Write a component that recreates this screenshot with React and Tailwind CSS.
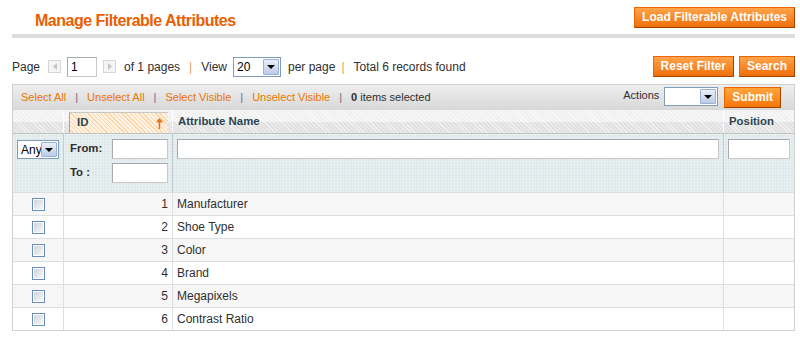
import React from "react";

const rows = [
  [1, "Manufacturer"],
  [2, "Shoe Type"],
  [3, "Color"],
  [4, "Brand"],
  [5, "Megapixels"],
  [6, "Contrast Ratio"],
];

const hdrBg =
  "bg-[image:repeating-linear-gradient(45deg,rgba(255,255,255,0.55)_0_1px,transparent_1px_3px),linear-gradient(#f1f1f1_0_50%,#e1e1e1_50%_100%)]";

const OrangeButton = ({ children, className = "" }) => (
  <button
    className={`h-[21px] px-[7px] border border-[#ed6502] border-r-[#a04300] border-b-[#a04300] bg-[image:linear-gradient(#ffa44a,#f06f0b)] text-white text-[12px] font-bold leading-[19px] whitespace-nowrap ${className}`}
  >
    {children}
  </button>
);

const XpSelect = ({ value, className = "" }) => (
  <div className={`flex bg-white border border-[#7f9db9] p-[1px] ${className}`}>
    <span className="flex-1 overflow-hidden whitespace-nowrap pl-[2px] text-[12px] leading-[16px] text-black">
      {value}
    </span>
    <span className="w-[16px] shrink-0 flex items-center justify-center border border-[#98b1d8] rounded-[1px] bg-[image:linear-gradient(#eaf0fa,#bccbe6)]">
      <span className="w-0 h-0 border-x-[4px] border-x-transparent border-t-[4px] border-t-black" />
    </span>
  </div>
);

const TextBox = ({ className = "", value = "" }) => (
  <input
    readOnly
    defaultValue={value}
    className={`block bg-white border border-[#aaaaaa] border-r-[#c8c8c8] border-b-[#c8c8c8] px-[3px] text-[12px] text-black outline-none ${className}`}
  />
);

const PagerArrow = ({ dir }) => (
  <span className="w-[13px] h-[13px] border border-[#d6d6d6] bg-[#f5f5f5] flex items-center justify-center">
    <svg width="4" height="7" viewBox="0 0 4 7">
      <path d={dir === "left" ? "M4 0L0 3.5L4 7Z" : "M0 0L4 3.5L0 7Z"} fill="#c6c6c6" />
    </svg>
  </span>
);

const Checkbox = () => (
  <span className="block w-[13px] h-[13px] border border-[#6a8bbd] shadow-[inset_0_0_0_1px_#ffffff] bg-[image:linear-gradient(135deg,#cbd1d8,#fbfbfb)]" />
);

const Sep = ({ className = "" }) => <span className={`text-[#6b6b8a] ${className}`}>|</span>;

export default function App() {
  return (
    <div className="w-[800px] h-[340px] bg-white overflow-hidden font-['Liberation_Sans',Arial,sans-serif] text-[#2f2f2f]">
      <div className="ml-[12px] w-[783px]">
        {/* page title */}
        <div className="h-[38px] flex justify-between items-start border-b-4 border-[#dddddd]">
          <h3 className="mt-[11px] pl-[23px] text-[16px] leading-[20px] font-bold text-[#eb5e00] tracking-[-0.5px]">
            Manage Filterable Attributes
          </h3>
          <OrangeButton className="mt-[7px]">Load Filterable Attributes</OrangeButton>
        </div>

        {/* pager */}
        <div className="mt-[18px] h-[21px] flex items-center justify-between">
          <div className="flex items-center text-[12px] leading-[14px] whitespace-nowrap">
            <span>Page</span>
            <span className="ml-[8px]">
              <PagerArrow dir="left" />
            </span>
            <TextBox value="1" className="ml-[6px] w-[30px] h-[20px]" />
            <span className="ml-[6px]">
              <PagerArrow dir="right" />
            </span>
            <span className="ml-[8px]">of 1 pages</span>
            <span className="mx-[9px] text-[#e0a063]">|</span>
            <span>View</span>
            <XpSelect value="20" className="ml-[6px] w-[48px] h-[20px]" />
            <span className="ml-[7px]">per page</span>
            <span className="ml-[6px] mr-[9px] text-[#e0a063]">|</span>
            <span>Total 6 records found</span>
          </div>
          <div className="flex items-center">
            <OrangeButton>Reset Filter</OrangeButton>
            <OrangeButton className="ml-[5px]">Search</OrangeButton>
          </div>
        </div>

        {/* massaction bar */}
        <div className="mt-[7px] h-[26px] flex justify-between border border-b-0 border-[#d1cfcf] bg-[image:linear-gradient(#eeeeee,#d8d8d8)] text-[11px]">
          <div className="pl-[8px] flex items-center whitespace-nowrap">
            <span className="text-[#ea7601]">Select All</span>
            <Sep className="px-[9px]" />
            <span className="text-[#ea7601]">Unselect All</span>
            <Sep className="px-[9px]" />
            <span className="text-[#ea7601]">Select Visible</span>
            <Sep className="px-[9px]" />
            <span className="text-[#ea7601]">Unselect Visible</span>
            <Sep className="px-[9px]" />
            <span>
              <strong>0</strong> items selected
            </span>
          </div>
          <div className="pr-[13px] flex items-start">
            <span className="mt-[4px] leading-[13px]">Actions</span>
            <XpSelect value="" className="ml-[5px] mt-[2px] w-[54px] h-[19px]" />
            <OrangeButton className="ml-[6px] mt-[2px] h-[20px] leading-[18px] px-[7px] bg-[image:linear-gradient(#ffa63c,#f7760a)]">
              Submit
            </OrangeButton>
          </div>
        </div>

        {/* grid */}
        <div className="border-l border-r border-b border-[#d1cfcf]">
          <div className="flex h-[24px] border-b border-b-[#c2c2c2] text-[11.4px] font-bold text-[#2d444f]">
            <div className={`w-[51px] border-r border-r-white ${hdrBg}`} />
            <div className={`w-[109px] border-r border-r-white pl-[5px] pt-[2px] ${hdrBg}`}>
              <div className="w-[99px] h-full flex items-center justify-between pl-[7px] pr-[5px] border-l border-t border-l-[#a5a5a5] border-t-[#c8c8c8] bg-[image:repeating-linear-gradient(45deg,#fff2e2_0_2px,#fcd6ab_2px_3px)]">
                <span>ID</span>
                <svg width="7" height="11" viewBox="0 0 7 11">
                  <path d="M3.5 0L7 4.2H4.3V11H2.7V4.2H0Z" fill="#f26b0e" />
                </svg>
              </div>
            </div>
            <div className={`w-[551px] border-r border-r-white pl-[5px] flex items-center ${hdrBg}`}>
              Attribute Name
            </div>
            <div className={`flex-1 pl-[5px] flex items-center ${hdrBg}`}>Position</div>
          </div>

          <div className="flex h-[58px] bg-[#dee8ea] bg-[image:linear-gradient(90deg,rgba(255,255,255,0.28)_1px,transparent_1px),linear-gradient(rgba(255,255,255,0.28)_1px,transparent_1px)] bg-[size:3px_3px]">
            <div className="w-[51px] border-r border-r-[#c4cdcf] pl-[4px] pt-[6px]">
              <XpSelect value="Any" className="w-[42px] h-[19px]" />
            </div>
            <div className="w-[109px] border-r border-r-[#c4cdcf] pl-[6px] pt-[5px] text-[11.4px] font-bold">
              <div className="flex items-center justify-between pr-[4px]">
                <span>From:</span>
                <TextBox className="w-[56px] h-[20px]" />
              </div>
              <div className="mt-[4px] flex items-center justify-between pr-[4px]">
                <span>To :</span>
                <TextBox className="w-[56px] h-[20px]" />
              </div>
            </div>
            <div className="w-[551px] border-r border-r-[#c4cdcf] px-[4px] pt-[5px]">
              <TextBox className="w-full h-[20px]" />
            </div>
            <div className="flex-1 px-[4px] pt-[5px]">
              <TextBox className="w-full h-[20px]" />
            </div>
          </div>

          {rows.map(([id, name], i) => (
            <div
              key={id}
              className={`flex h-[23px] border-t border-[#dadfe0] text-[12px] leading-[22px] ${i % 2 === 0 ? "bg-[#f6f6f6]" : "bg-white"}`}
            >
              <div className="w-[51px] border-r border-r-[#dadfe0] flex items-center justify-center pl-[1px]">
                <Checkbox />
              </div>
              <div className="w-[109px] border-r border-r-[#dadfe0] text-right pr-[4px]">{id}</div>
              <div className="w-[551px] border-r border-r-[#dadfe0] pl-[4px]">{name}</div>
              <div className="flex-1" />
            </div>
          ))}
        </div>
      </div>
    </div>
  );
}
